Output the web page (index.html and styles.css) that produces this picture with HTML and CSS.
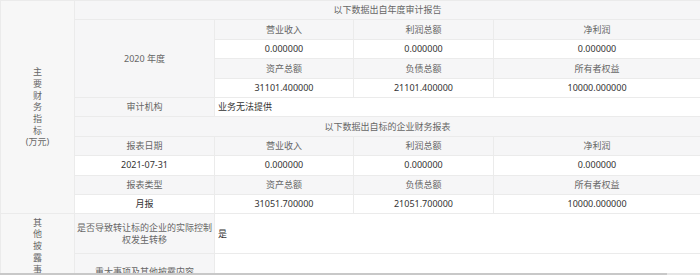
FILE: index.html
```html
<!DOCTYPE html>
<html lang="zh-CN">
<head>
  <meta charset="UTF-8">
  <title>财务指标</title>
  <link rel="stylesheet" href="styles.css">
</head>
<body>
  <table class="fin-table">
    <colgroup>
      <col class="c-label">
      <col class="c-2">
      <col class="c-3">
      <col class="c-4">
      <col class="c-5">
    </colgroup>
    <tr>
      <td class="side" rowspan="11">主<br>要<br>财<br>务<br>指<br>标<br>(万元)</td>
      <td class="head" colspan="4">以下数据出自年度审计报告</td>
    </tr>
    <tr>
      <td class="head" rowspan="4">2020 年度</td>
      <td class="head">营业收入</td>
      <td class="head">利润总额</td>
      <td class="head">净利润</td>
    </tr>
    <tr>
      <td class="val">0.000000</td>
      <td class="val">0.000000</td>
      <td class="val">0.000000</td>
    </tr>
    <tr>
      <td class="head">资产总额</td>
      <td class="head">负债总额</td>
      <td class="head">所有者权益</td>
    </tr>
    <tr>
      <td class="val">31101.400000</td>
      <td class="val">21101.400000</td>
      <td class="val">10000.000000</td>
    </tr>
    <tr>
      <td class="head">审计机构</td>
      <td class="val left" colspan="3">业务无法提供</td>
    </tr>
    <tr>
      <td class="head" colspan="4">以下数据出自标的企业财务报表</td>
    </tr>
    <tr>
      <td class="head">报表日期</td>
      <td class="head">营业收入</td>
      <td class="head">利润总额</td>
      <td class="head">净利润</td>
    </tr>
    <tr>
      <td class="val">2021-07-31</td>
      <td class="val">0.000000</td>
      <td class="val">0.000000</td>
      <td class="val">0.000000</td>
    </tr>
    <tr>
      <td class="head">报表类型</td>
      <td class="head">资产总额</td>
      <td class="head">负债总额</td>
      <td class="head">所有者权益</td>
    </tr>
    <tr>
      <td class="val">月报</td>
      <td class="val">31051.700000</td>
      <td class="val">21051.700000</td>
      <td class="val">10000.000000</td>
    </tr>
    <tr class="tall">
      <td class="side" rowspan="2">其<br>他<br>披<br>露<br>事<br>项</td>
      <td class="head">是否导致转让标的企业的实际控制<br>权发生转移</td>
      <td class="val left" colspan="3">是</td>
    </tr>
    <tr class="last">
      <td class="head">重大事项及其他披露内容</td>
      <td class="val left" colspan="3"></td>
    </tr>
  </table>

  <div class="scrollbar"><div class="thumb"></div></div>
</body>
</html>
```

FILE: styles.css
```css
body {
  margin: 0;
  background: #ffffff;
  font-family: "Noto Sans", "Noto Sans CJK SC", sans-serif;
  font-size: 9px;
  color: #333;
  overflow: hidden;
}

.fin-table {
  width: 700px;
  table-layout: fixed;
  border-collapse: collapse;
}

.c-label { width: 74px; }
.c-2 { width: 140px; }
.c-3 { width: 139px; }
.c-4 { width: 140px; }
.c-5 { width: 207px; }

tr {
  height: 19.4px;
}

td {
  border: 1px solid #ebebeb;
  padding: 0 2px;
  text-align: center;
  line-height: 11.7px;
}

.side {
  background: #f7f7f7;
  color: #666;
}

.head {
  background: #f6f6f7;
  color: #666;
}

.val {
  background: #ffffff;
  color: #333;
}

.left {
  text-align: left;
  padding-left: 3px;
}

tr.tall {
  height: 40px;
}

tr.last {
  height: 36px;
}

.scrollbar {
  position: fixed;
  left: 0;
  right: 0;
  bottom: 0;
  height: 2px;
  background: #e6e6e6;
}

.thumb {
  width: 667px;
  height: 2px;
  background: #c8c8c8;
}
```
